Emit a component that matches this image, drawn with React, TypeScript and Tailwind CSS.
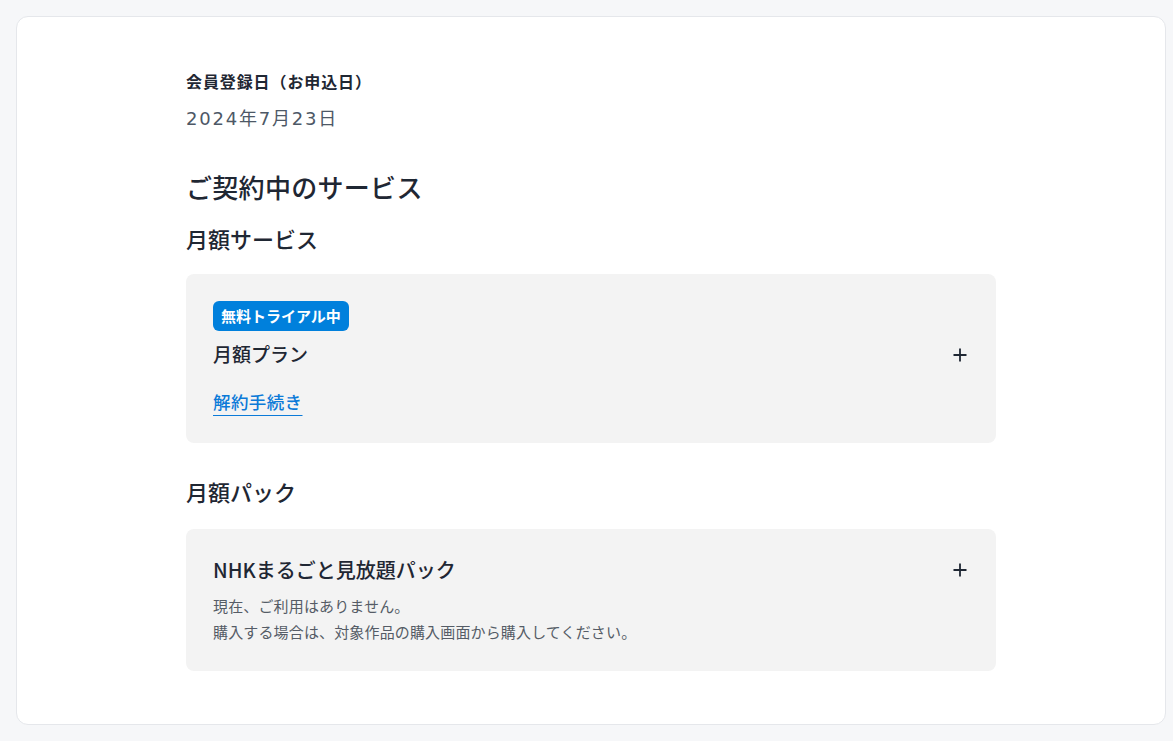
import React from "react";

const Plus = () => (
  <svg width="14" height="14" viewBox="0 0 14 14" fill="none">
    <path d="M7 0.5V13.5M0.5 7H13.5" stroke="#1f2733" strokeWidth="1.8" />
  </svg>
);

export default function App() {
  return (
    <div
      className="min-h-screen bg-[#f6f7f9] pt-[16px] pb-[16px] pl-[16px] pr-[7px]"
      style={{ fontFamily: '"Noto Sans CJK JP", "Noto Sans", sans-serif' }}
    >
      <div className="h-[709px] rounded-[12px] border border-[#e5e7eb] bg-white pl-[169px] pt-[52px]">
        <div className="w-[810px] text-[#1f2733]">
          <div className="text-[16px] font-bold leading-[24px] tracking-[0.9px]">会員登録日（お申込日）</div>
          <div
            className="mt-[13px] text-[18px] leading-[26px] tracking-[1.8px] text-[#4d5866]"
            style={{ fontFamily: '"DejaVu Sans", "Noto Sans CJK JP", sans-serif' }}
          >
            2024年7月23日
          </div>

          <h2 className="mt-[38px] text-[26px] font-medium leading-[34px] tracking-[0.3px]">ご契約中のサービス</h2>
          <h3 className="mt-[19px] text-[22px] font-medium leading-[30px]">月額サービス</h3>

          <div className="mt-[21px] flex items-start justify-between rounded-[8px] bg-[#f3f3f3] px-[27px] pt-[27px] pb-[29px]">
            <div className="flex flex-col items-start">
              <span className="rounded-[6px] bg-[#0080dc] px-[8px] py-[3px] text-[15px] font-bold leading-[24px] text-white">
                無料トライアル中
              </span>
              <div className="mt-[9px] text-[19px] font-medium leading-[28px]">月額プラン</div>
              <a
                href="#"
                className="mt-[22px] text-[17.5px] font-medium leading-[24px] tracking-[0.4px] text-[#0b7ad8] underline decoration-1 underline-offset-[6px]"
              >
                解約手続き
              </a>
            </div>
            <div className="mt-[47px] mr-[2px]">
              <Plus />
            </div>
          </div>

          <h3 className="mt-[33px] text-[22px] font-medium leading-[30px]">月額パック</h3>

          <div className="mt-[23px] flex items-start justify-between rounded-[8px] bg-[#f3f3f3] px-[27px] pt-[26px] pb-[26px]">
            <div className="flex flex-col items-start">
              <div className="text-[20px] font-medium leading-[30px]">NHKまるごと見放題パック</div>
              <div className="mt-[8px] text-[15px] leading-[26px] tracking-[0.15px] text-[#555c66]">
                現在、ご利用はありません。
                <br />
                購入する場合は、対象作品の購入画面から購入してください。
              </div>
            </div>
            <div className="mt-[8px] mr-[2px]">
              <Plus />
            </div>
          </div>
        </div>
      </div>
    </div>
  );
}
